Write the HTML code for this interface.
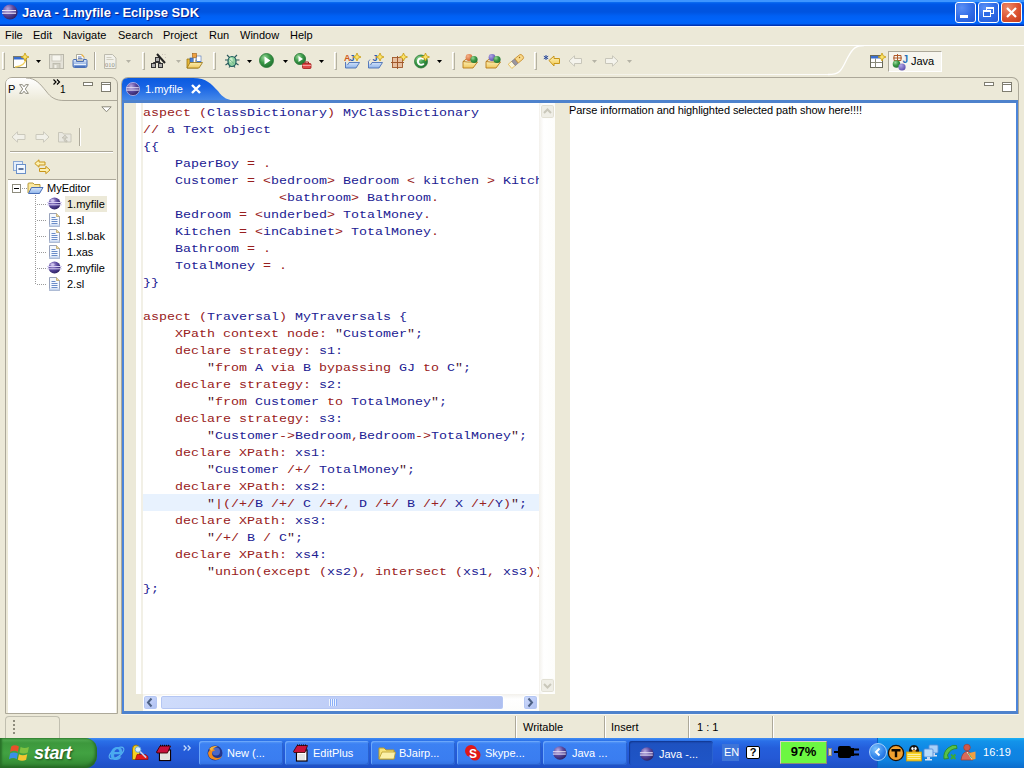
<!DOCTYPE html>
<html><head><meta charset="utf-8">
<style>
*{box-sizing:border-box;margin:0;padding:0}
html,body{width:1024px;height:768px;overflow:hidden;background:#ece9d8;font-family:"Liberation Sans",sans-serif;font-size:11px;color:#000}
.abs{position:absolute}
#title{left:0;top:0;width:1024px;height:26px;background:linear-gradient(#3d95ff 0,#3d95ff 1.5px,#0a6af0 2.5px,#0058e8 4px,#0054e0 8px,#0054e0 12px,#0060f4 16px,#0064fb 21px,#0062f6 24px,#0034b4 25px,#0034b4 26px)}
#title .t{left:22px;top:5px;color:#fff;font-weight:bold;font-size:13px;letter-spacing:0px;text-shadow:1px 1px 1px #0a1883;white-space:nowrap}
#menu{left:0;top:26px;width:1024px;height:19px;background:#ece9d8;border-top:1px solid #f8faff}
#menu span{position:absolute;top:2px;font-size:11px}
#tool{left:0;top:45px;width:1024px;height:1px;background:#fff}
.sep{position:absolute;top:6px;width:2px;height:18px;border-left:1px solid #aca899;border-right:1px solid #fff}
#left{left:5px;top:77px;width:112px;height:635px;border:1px solid #aca899;border-radius:7px 7px 0 0;background:#ece9d8}
#tree{left:1px;top:100px;width:108px;height:533px;background:#fff}
#edin{left:122px;top:100px;width:896px;height:614px;border:2px solid #4b84d9;border-top:3px solid #4e82cc;border-bottom:3px solid #4e82cc;background:#fff}
#code{left:142px;padding-left:1px;top:103px;font-family:"Liberation Mono",monospace;font-size:13.33px;line-height:17px;color:#202092;width:397px;overflow:hidden}
#code div{height:17px;white-space:pre}
#code i{display:block;position:relative;top:1px;font-style:normal;transform:scaleY(.87);transform-origin:0 12px}
#code .hl{background:#e8f2fe}
.r{color:#982020}
.k{color:#502030}
#status{left:0;top:714px;width:1024px;height:24px}
#task{left:0;top:738px;width:1024px;height:30px;background:linear-gradient(#3f8cf3 0,#2a6fe8 3px,#245edb 10px,#2459d6 20px,#1d4fc4 30px)}

.wb{position:absolute;top:2px;width:21px;height:21px;border:1px solid #fff;border-radius:3px;background:radial-gradient(circle at 30% 25%,#5a8ff5 0,#2f6be6 55%,#2356d4 100%)}
.wb.close{background:radial-gradient(circle at 30% 25%,#ee8a6a 0,#dc5230 55%,#c23a1c 100%)}
#tabhdr{left:0;top:0;width:895px;height:23px}
.sb{position:absolute;background:linear-gradient(90deg,#f3f1ec 0,#fff 30%,#fdfdfb 100%)}
.sbh{position:absolute;background:linear-gradient(#f3f1ec 0,#fff 30%,#fdfdfb 100%)}
.sbtn{position:absolute;width:15px;height:15px;border:1px solid #fff;border-radius:3px;background:linear-gradient(135deg,#cfdcfb 0,#bccbf6 60%,#aebff0 100%);box-shadow:inset 0 0 0 1px #b4c6f3}
.sbtn.dis{background:#efeee6;box-shadow:inset 0 0 0 1px #e2e0d4;border-color:#fdfdfb}

.stsep{position:absolute;top:716px;width:2px;height:22px;border-left:1px solid #aca899;border-right:1px solid #fff}
.sttx{position:absolute;top:721px;font-size:11px}
.tb{position:absolute;top:741px;width:84px;height:24px;border-radius:3px;background:linear-gradient(#5a9cf8 0,#3c81f3 3px,#3a7df0 19px,#3270e0 24px);box-shadow:inset 1px 1px 0 #6aa6fa,inset -1px -1px 0 #2a62cf;color:#fff;font-size:11px}
.tb.act{background:linear-gradient(#1a45a8 0,#1e52c1 3px,#1f55c7 24px);box-shadow:inset 1px 1px 1px #123a96,inset -1px 0 0 #2a62cf}
.tb span{position:absolute;left:28px;top:6px;white-space:nowrap}
.tb svg{position:absolute;left:7px;top:3px}

.hd{position:absolute;top:52px;width:3px;height:18px;border-left:1px solid #fff;border-right:1px solid #b5b2a2;background:#ece9d8;border-top:1px solid #fff;border-bottom:1px solid #b5b2a2}
.sp{position:absolute;top:52px;width:2px;height:18px;border-left:1px solid #aca899;border-right:1px solid #fff}
.tx{font-size:11px;white-space:nowrap}
</style></head><body>
<div id="title" class="abs">
<svg class="abs" style="left:1px;top:3px" width="18" height="18" viewBox="0 0 18 18"><defs><radialGradient id="eg" cx="35%" cy="30%" r="75%"><stop offset="0" stop-color="#b9a9e0"/><stop offset=".5" stop-color="#5b4aa0"/><stop offset="1" stop-color="#2c2060"/></radialGradient></defs><circle cx="9" cy="9" r="7.6" fill="url(#eg)"/><rect x="1" y="7" width="14" height="1.2" fill="#e8e4f8"/><rect x="1" y="9.6" width="14" height="1.2" fill="#e8e4f8"/></svg>
<div class="abs t">Java - 1.myfile - Eclipse SDK</div>
<div class="wb" style="left:955px"><div class="abs" style="left:4px;top:12px;width:8px;height:3px;background:#fff"></div></div>
<div class="wb" style="left:978px"><div class="abs" style="left:7px;top:4px;width:8px;height:7px;border:1px solid #fff;border-top-width:2px"></div><div class="abs" style="left:4px;top:7px;width:8px;height:7px;border:1px solid #fff;border-top-width:2px;background:#2f6be6"></div></div>
<div class="wb close" style="left:1001px"><svg class="abs" style="left:0;top:0" width="19" height="19"><path d="M5 5 L14 14 M14 5 L5 14" stroke="#fff" stroke-width="2.2"/></svg></div>
</div>
<div id="menu" class="abs"><span style="left:5px">File</span><span style="left:33px">Edit</span><span style="left:63px">Navigate</span><span style="left:118px">Search</span><span style="left:163px">Project</span><span style="left:209px">Run</span><span style="left:240px">Window</span><span style="left:290px">Help</span></div>
<div id="tool" class="abs"></div>
<!--TOOL-->
<svg width="0" height="0" style="position:absolute"><defs>
<linearGradient id="fold" x1="0" y1="0" x2="0" y2="1"><stop offset="0" stop-color="#fbeeb0"/><stop offset="1" stop-color="#f0c860"/></linearGradient>
<linearGradient id="bfold" x1="0" y1="0" x2="0" y2="1"><stop offset="0" stop-color="#d6e6fb"/><stop offset="1" stop-color="#8fb4ea"/></linearGradient>
<radialGradient id="grn" cx="35%" cy="30%" r="75%"><stop offset="0" stop-color="#9ad89a"/><stop offset=".5" stop-color="#3c9a48"/><stop offset="1" stop-color="#1f7030"/></radialGradient>
<radialGradient id="org" cx="35%" cy="30%" r="75%"><stop offset="0" stop-color="#f6b48a"/><stop offset="1" stop-color="#d0602a"/></radialGradient>
<radialGradient id="pur" cx="35%" cy="30%" r="75%"><stop offset="0" stop-color="#b0a6e4"/><stop offset="1" stop-color="#5a4cae"/></radialGradient>
<linearGradient id="prt" x1="0" y1="0" x2="0" y2="1"><stop offset="0" stop-color="#dce8fa"/><stop offset="1" stop-color="#6f96d6"/></linearGradient>
<linearGradient id="yar" x1="0" y1="0" x2="0" y2="1"><stop offset="0" stop-color="#fdf3c0"/><stop offset="1" stop-color="#f3c84a"/></linearGradient>
</defs></svg>
<div class="hd" style="left:2px"></div>
<svg class="abs" style="left:13px;top:53px" width="16" height="16" viewBox="0 0 16 16"><rect x=".5" y="3.5" width="13" height="11" fill="#fff" stroke="#7a7a6a"/><rect x="1" y="4" width="12" height="2.5" fill="#3a6fd0"/><path d="M2 14 Q12 13 13 6" fill="none" stroke="#f0d060" stroke-width="1.5"/><path d="M12 0L13.2 2.8L16 4L13.2 5.2L12 8L10.8 5.2L8 4L10.8 2.8Z" fill="#fbe36a" stroke="#c89a10" stroke-width=".8"/></svg>
<svg class="abs" style="left:36px;top:60px" width="5" height="3"><path d="M0 0h5L2.5 3z" fill="#000"/></svg>
<svg class="abs" style="left:49px;top:54px" width="15" height="15" viewBox="0 0 15 15"><rect x=".5" y=".5" width="14" height="14" fill="#e4e2d8" stroke="#b9b7aa"/><rect x="3" y="1" width="9" height="6" fill="#f6f5ee" stroke="#c5c3b6" stroke-width=".8"/><rect x="4" y="9.5" width="7" height="5" fill="#d2d0c4" stroke="#b9b7aa" stroke-width=".8"/><rect x="5.5" y="11" width="2" height="3" fill="#f1f0e8"/></svg>
<svg class="abs" style="left:72px;top:53px" width="16" height="16" viewBox="0 0 16 16"><path d="M4.5 7V1.5h5l2.5 2.5v3z" fill="#fff" stroke="#9a9888" stroke-width=".8"/><path d="M9.5 1.5l2.5 2.5" stroke="#e8b040" stroke-width="1.300"/><path d="M6 4h3.5M6 5.700h4.5" stroke="#4a68a8" stroke-width=".9"/><path d="M1 7.5Q1 6.5 2 6.5H4.5V8.5H11.5V6.5H14Q15 6.5 15 7.5V13Q15 14.5 13.5 14.5H2.5Q1 14.5 1 13Z" fill="url(#prt)" stroke="#4a6fb6" stroke-width="1"/><path d="M2 11.5H14" stroke="#eaf2fc" stroke-width="1"/><path d="M2.5 13.5H13.5" stroke="#4a72be" stroke-width="1.5"/></svg>
<div class="sp" style="left:94px"></div>
<svg class="abs" style="left:104px;top:54px" width="13" height="15" viewBox="0 0 13 15"><path d="M.5 .5h8l3.5 3.5v10.5h-11.5z" fill="#f2f1ea" stroke="#bdbbae"/><path d="M2.5 3.5h5M2.5 5.5h7" stroke="#cfcdc0" stroke-width="1"/><text x="1" y="12.5" font-size="6.5" font-family="Liberation Serif" fill="#8f8d80">010</text></svg>
<svg class="abs" style="left:126px;top:60px" width="5" height="3"><path d="M0 0h5L2.5 3z" fill="#b5b3a6"/></svg>
<div class="hd" style="left:142px"></div>
<svg class="abs" style="left:150px;top:53px" width="17" height="16" viewBox="0 0 17 16"><rect x="5.5" y="4.5" width="4" height="4" fill="#b0b0b0" stroke="#333"/><rect x="1.5" y="10.5" width="4" height="4" fill="#b0b0b0" stroke="#333"/><rect x="8.5" y="10.5" width="4" height="4" fill="#b0b0b0" stroke="#333"/><path d="M7.5 8.5v1M3.5 10.5v-1h7v1" fill="none" stroke="#333"/><path d="M7 1 L15 10" stroke="#222" stroke-width="2"/><path d="M12 1l.5 .5M14.5 2l.5-.5M15 4.5h.5" stroke="#a99" stroke-width="1"/></svg>
<svg class="abs" style="left:176px;top:60px" width="5" height="3"><path d="M0 0h5L2.5 3z" fill="#b5b3a6"/></svg>
<svg class="abs" style="left:186px;top:53px" width="17" height="16" viewBox="0 0 17 16"><path d="M1 6h4l1 1.5h6V15H1z" fill="#e8b838" stroke="#9a7410" stroke-width=".8"/><rect x="4" y="5" width="4" height="6" fill="#4a7fd6" stroke="#2a4f96" stroke-width=".6"/><rect x="10.5" y="3" width="4.5" height="8" fill="#fff" stroke="#4a6fb6" stroke-width=".6"/><rect x="11" y="8" width="4" height="3" fill="#4a7fd6"/><rect x="6.5" y=".5" width="4" height="4" fill="#f0a040" stroke="#a06010" stroke-width=".6"/><rect x="7.5" y="5" width="2" height="6" fill="#fff" stroke="#888" stroke-width=".4"/><path d="M1 15 L4 9.5 H16.5 L13 15Z" fill="url(#fold)" stroke="#9a7410" stroke-width=".8"/></svg>
<div class="hd" style="left:213px"></div>
<svg class="abs" style="left:224px;top:53px" width="16" height="16" viewBox="0 0 16 16"><path d="M3 2l3 3M13 2l-3 3M1 7h3M12 7h3.5M1.5 12l3-2M14.5 12l-3-2M5 14.5l1.5-2M11 14.5l-1.5-2" stroke="#2a5a5a" stroke-width="1.100" fill="none"/><ellipse cx="8" cy="8.5" rx="4" ry="5" fill="#8fd0a0" stroke="#1f5f5f" stroke-width="1.200"/><ellipse cx="7" cy="7" rx="1.800" ry="2.5" fill="#c8f0c8"/><path d="M5.5 6.5 L10 10.5" stroke="#5aa07a" stroke-width=".7"/></svg>
<svg class="abs" style="left:247px;top:60px" width="5" height="3"><path d="M0 0h5L2.5 3z" fill="#000"/></svg>
<svg class="abs" style="left:259px;top:53px" width="15" height="15" viewBox="0 0 15 15"><circle cx="7.5" cy="7.5" r="7" fill="url(#grn)" stroke="#2a7a36" stroke-width=".8"/><path d="M5.5 3.5v8l6-4z" fill="#fff"/></svg>
<svg class="abs" style="left:283px;top:60px" width="5" height="3"><path d="M0 0h5L2.5 3z" fill="#000"/></svg>
<svg class="abs" style="left:294px;top:53px" width="18" height="16" viewBox="0 0 18 16"><circle cx="6" cy="6" r="5.600" fill="url(#grn)" stroke="#2a7a36" stroke-width=".8"/><path d="M4.5 3v6l4.5-3z" fill="#fff"/><rect x="8.5" y="10.5" width="8.5" height="5" rx="1" fill="#e04848" stroke="#a01818" stroke-width=".8"/><path d="M11 10.5v-1.5h3.5v1.5" fill="none" stroke="#a01818" stroke-width="1"/><path d="M8.5 12.5h8.5" stroke="#f8b0b0" stroke-width=".8"/></svg>
<svg class="abs" style="left:319px;top:60px" width="5" height="3"><path d="M0 0h5L2.5 3z" fill="#000"/></svg>
<div class="hd" style="left:334px"></div>
<svg class="abs" style="left:344px;top:53px" width="17" height="16" viewBox="0 0 17 16"><path d="M1.5 9 L1.5 15 H12 L15.5 9.5 H5 L3.5 12" fill="url(#bfold)" stroke="#4a6fb6" stroke-width=".9"/><text x="0" y="8" font-size="9" font-weight="bold" font-family="Liberation Sans" fill="#d05a1a">A</text><text x="5.5" y="8" font-size="9" font-weight="bold" font-family="Liberation Sans" fill="#2a5fb0">J</text><path d="M13 0L14.2 2.8L17 4L14.2 5.2L13 8L11.8 5.2L9 4L11.8 2.8Z" fill="#fbe36a" stroke="#c89a10" stroke-width=".8"/></svg>
<svg class="abs" style="left:367px;top:53px" width="17" height="16" viewBox="0 0 17 16"><path d="M1.5 9 L1.5 15 H12 L15.5 9.5 H5 L3.5 12" fill="url(#bfold)" stroke="#4a6fb6" stroke-width=".9"/><path d="M1 9 l2-2.5" stroke="#4a6fb6" stroke-width=".8"/><text x="5.5" y="8" font-size="9" font-weight="bold" font-family="Liberation Sans" fill="#2a5fb0">J</text><path d="M13 0L14.2 2.8L17 4L14.2 5.2L13 8L11.8 5.2L9 4L11.8 2.8Z" fill="#fbe36a" stroke="#c89a10" stroke-width=".8"/></svg>
<svg class="abs" style="left:391px;top:53px" width="17" height="16" viewBox="0 0 17 16"><rect x="1.5" y="4.5" width="10" height="10" fill="#e8c0a0" stroke="#a0582a" stroke-width=".9"/><path d="M6.5 3v13M0 9.5h13" stroke="#a0582a" stroke-width="1"/><path d="M12.5 0L13.7 2.8L16.5 4L13.7 5.2L12.5 8L11.3 5.2L8.5 4L11.3 2.8Z" fill="#fbe36a" stroke="#c89a10" stroke-width=".8"/></svg>
<svg class="abs" style="left:414px;top:53px" width="16" height="16" viewBox="0 0 16 16"><circle cx="7" cy="8.5" r="6.5" fill="url(#grn)" stroke="#2a7a36" stroke-width=".8"/><path d="M9.800 6.5 A3.300 3.300 0 1 0 9.800 10.5" fill="none" stroke="#fff" stroke-width="2"/><path d="M11.5 0L12.7 2.8L15.5 4L12.7 5.2L11.5 8L10.3 5.2L7.5 4L10.3 2.8Z" fill="#fbe36a" stroke="#c89a10" stroke-width=".8"/></svg>
<svg class="abs" style="left:437px;top:60px" width="5" height="3"><path d="M0 0h5L2.5 3z" fill="#000"/></svg>
<div class="hd" style="left:452px"></div>
<svg class="abs" style="left:462px;top:53px" width="17" height="16" viewBox="0 0 17 16"><path d="M1 8.5 V15 H11 L15.5 9 H5.5 Z" fill="url(#fold)" stroke="#b87a18" stroke-width=".9"/><path d="M1 8.5 L5 5.5" stroke="#b87a18" stroke-width=".9"/><circle cx="7" cy="4.5" r="3.400" fill="url(#org)"/><circle cx="12" cy="6.5" r="3.600" fill="url(#grn)"/></svg>
<svg class="abs" style="left:485px;top:53px" width="17" height="16" viewBox="0 0 17 16"><path d="M1 8.5 V15 H11 L15.5 9 H5.5 Z" fill="url(#fold)" stroke="#b87a18" stroke-width=".9"/><path d="M1 8.5 L5 5.5" stroke="#b87a18" stroke-width=".9"/><circle cx="7" cy="4.5" r="3.400" fill="url(#pur)"/><circle cx="12" cy="6.5" r="3.600" fill="url(#grn)"/></svg>
<svg class="abs" style="left:508px;top:53px" width="17" height="16" viewBox="0 0 17 16"><g transform="rotate(-40 8 8)"><rect x="0" y="5.5" width="5" height="5.5" fill="#fbf6d8" stroke="#e0b040" stroke-width=".7"/><rect x="4.5" y="5.5" width="4" height="5.5" fill="#9a96a0" stroke="#6a6670" stroke-width=".5"/><path d="M8.5 5.5h6q2 0 2 2.750t-2 2.750h-6z" fill="#f8d888" stroke="#c88a28" stroke-width=".8"/><circle cx="13" cy="7.5" r=".7" fill="#a06a18"/></g></svg>
<div class="hd" style="left:534px"></div>
<svg class="abs" style="left:543px;top:53px" width="18" height="16" viewBox="0 0 18 16"><path d="M6 8 L11 3.5 V6 H16.5 V11 H11 V13.5Z" fill="url(#yar)" stroke="#c8961a" stroke-width="1" transform="translate(0,-.5)"/><path d="M3 2v5M.8 3.200l4.400 2.600M5.200 3.200L.8 5.800" stroke="#2a4a9a" stroke-width="1"/></svg>
<svg class="abs" style="left:568px;top:55px" width="15" height="12" viewBox="0 0 15 12"><path d="M1 6 L6.5 .8 V3.5 H13.5 V8.5 H6.5 V11.200Z" fill="#f4f3ec" stroke="#c8c6ba" stroke-width="1"/></svg>
<svg class="abs" style="left:592px;top:60px" width="5" height="3"><path d="M0 0h5L2.5 3z" fill="#b5b3a6"/></svg>
<svg class="abs" style="left:604px;top:55px" width="15" height="12" viewBox="0 0 15 12"><path d="M14 6 L8.5 .8 V3.5 H1.5 V8.5 H8.5 V11.200Z" fill="#f4f3ec" stroke="#c8c6ba" stroke-width="1"/></svg>
<svg class="abs" style="left:627px;top:60px" width="5" height="3"><path d="M0 0h5L2.5 3z" fill="#b5b3a6"/></svg>
<div class="abs" style="left:0;top:74px;width:831px;height:1px;background:linear-gradient(90deg,rgba(255,255,255,0) 0,rgba(255,255,255,0) 50%,rgba(255,255,255,.9) 100%)"></div>
<svg class="abs" style="left:828px;top:45px" width="36" height="31"><path d="M0 29.5 C14 29.5 14 23 20 12 C25 3 28 .5 36 .5" fill="none" stroke="#fff" stroke-width="1.300"/></svg>
<svg class="abs" style="left:870px;top:53px" width="16" height="16" viewBox="0 0 16 16"><rect x=".5" y="2.5" width="12" height="12" fill="#fff" stroke="#6a6a5a"/><rect x="1" y="3" width="11" height="2.5" fill="#3a6fd0"/><path d="M1 9.5h11M5.5 5.5v9" stroke="#8a8a7a" stroke-width="1"/><path d="M12 0L13.2 2.8L16 4L13.2 5.2L12 8L10.8 5.2L8 4L10.8 2.8Z" fill="#fbe36a" stroke="#c89a10" stroke-width=".8"/></svg>
<div class="abs" style="left:888px;top:51px;width:54px;height:21px;border:1px solid #aca899;border-right-color:#fff;border-bottom-color:#fff;background:#f6f5ee"></div>
<svg class="abs" style="left:892px;top:54px" width="18" height="17" viewBox="0 0 18 17"><path d="M2 1.5h7v5h-7zM5.5 0v8M1 4h9" fill="none" stroke="#b05a2a" stroke-width="1"/><circle cx="4.5" cy="10" r="3.800" fill="url(#grn)"/><circle cx="10" cy="13" r="3.600" fill="url(#pur)"/><text x="10.5" y="8.5" font-size="10" font-weight="bold" font-family="Liberation Sans" fill="#2a6fb8">J</text></svg>
<div class="abs" style="left:911px;top:55px;font-size:11px">Java</div>
<!--/TOOL-->
<!--LEFT-->
<div class="abs" style="left:5px;top:77px;width:113px;height:637px;border:1px solid #aca899;border-radius:7px 7px 0 0"></div>
<svg class="abs" style="left:6px;top:78px" width="111" height="23" viewBox="0 0 111 23"><defs><linearGradient id="ltg" x1="0" y1="0" x2="0" y2="1"><stop offset="0" stop-color="#fff"/><stop offset="1" stop-color="#ece9d8"/></linearGradient></defs><path d="M0 23 V6 Q0 0 6 0 H20 C30 0 34 6 40 13 C45 20 50 22.5 58 22.5 H111 V23Z" fill="url(#ltg)"/><path d="M20 0 C30 0 34 6 40 13 C45 20 50 22.5 58 22.5 H111" fill="none" stroke="#aca899" stroke-width="1"/></svg>
<div class="abs" style="left:8px;top:83px;font-size:11px">P</div>
<svg class="abs" style="left:18px;top:83px" width="12" height="12" viewBox="0 0 11 11"><path d="M1.5 1.5h2.5l1.5 2 1.5-2h2.5l-2.800 4 2.800 4h-2.5l-1.5-2-1.5 2h-2.5l2.800-4z" fill="#fff" stroke="#8a887a" stroke-width=".9"/></svg>
<svg class="abs" style="left:53px;top:79px" width="8" height="7" viewBox="0 0 8 7"><path d="M.5 .5L3 3 .5 5.5M4 .5L6.5 3 4 5.5" fill="none" stroke="#000" stroke-width="1.200"/></svg>
<div class="abs" style="left:60px;top:84px;font-size:10px">1</div>
<div class="abs" style="left:83px;top:82px;width:10px;height:4px;border:1px solid #7f7d70;background:#fff"></div>
<div class="abs" style="left:101px;top:82px;width:10px;height:10px;border:1px solid #7f7d70;background:#fff"><div class="abs" style="left:0;top:1px;width:8px;height:1px;background:#7f7d70"></div></div>
<svg class="abs" style="left:101px;top:106px" width="11" height="7" viewBox="0 0 11 7"><path d="M.8 .8h9.400L5.5 5.800z" fill="#fff" stroke="#8a887a" stroke-width="1"/></svg>
<svg class="abs" style="left:11px;top:131px" width="16" height="12" viewBox="0 0 16 12"><path d="M1 6 L6.5 .8 V3.5 H14 V8.5 H6.5 V11.200Z" fill="#f1f0e8" stroke="#cbc9bc" stroke-width="1"/></svg>
<svg class="abs" style="left:34px;top:131px" width="16" height="12" viewBox="0 0 16 12"><path d="M15 6 L9.5 .8 V3.5 H2 V8.5 H9.5 V11.200Z" fill="#f1f0e8" stroke="#cbc9bc" stroke-width="1"/></svg>
<svg class="abs" style="left:58px;top:130px" width="14" height="14" viewBox="0 0 14 14"><path d="M.5 2.5h4l1 1.5h7.5v8h-12.5z" fill="#e9e8e0" stroke="#c5c3b6" stroke-width=".9"/><path d="M7 5l-3 3h2v2q0 2 3 2v-1.5q-1.5 0-1.5-1v-1.5h2z" fill="#d5d3c8" stroke="#b9b7aa" stroke-width=".6"/></svg>
<div class="abs" style="left:79px;top:128px;width:2px;height:18px;border-left:1px solid #aca899;border-right:1px solid #fff"></div>
<div class="abs" style="left:10px;top:151px;width:103px;height:2px;border-top:1px solid #aca899;border-bottom:1px solid #fff"></div>
<svg class="abs" style="left:13px;top:161px" width="13" height="13" viewBox="0 0 13 13"><rect x=".5" y=".5" width="9" height="9" fill="#e4eefa" stroke="#8aa8d4"/><rect x="3.5" y="3.5" width="9" height="9" fill="#f2f8ff" stroke="#6a90c8"/><path d="M5.5 8h5" stroke="#1f3f7a" stroke-width="1.400"/></svg>
<svg class="abs" style="left:34px;top:159px" width="17" height="16" viewBox="0 0 17 16"><path d="M.8 4.5 L5 .8 V3 H11 V6 H5 V8.200Z" fill="#fdf0b0" stroke="#c8961a" stroke-width="1"/><path d="M16 11 L11.800 7.300 V9.5 H5.5 V12.5 H11.800 V14.700Z" fill="#fdf0b0" stroke="#c8961a" stroke-width="1"/></svg>
<div class="abs" style="left:8px;top:179px;width:108px;height:534px;background:#fff;border-top:1px solid #aca899"></div>
<div class="abs" style="left:35px;top:195px;width:1px;height:90px;background:repeating-linear-gradient(#9a9a9a 0,#9a9a9a 1px,transparent 1px,transparent 2px)"></div>
<div class="abs" style="left:22px;top:188px;width:6px;height:1px;background:repeating-linear-gradient(90deg,#9a9a9a 0,#9a9a9a 1px,transparent 1px,transparent 2px)"></div>
<div class="abs" style="left:36px;top:204px;width:11px;height:1px;background:repeating-linear-gradient(90deg,transparent 0,transparent 1px,#9a9a9a 1px,#9a9a9a 2px)"></div>
<div class="abs" style="left:36px;top:220px;width:11px;height:1px;background:repeating-linear-gradient(90deg,transparent 0,transparent 1px,#9a9a9a 1px,#9a9a9a 2px)"></div>
<div class="abs" style="left:36px;top:236px;width:11px;height:1px;background:repeating-linear-gradient(90deg,transparent 0,transparent 1px,#9a9a9a 1px,#9a9a9a 2px)"></div>
<div class="abs" style="left:36px;top:252px;width:11px;height:1px;background:repeating-linear-gradient(90deg,transparent 0,transparent 1px,#9a9a9a 1px,#9a9a9a 2px)"></div>
<div class="abs" style="left:36px;top:268px;width:11px;height:1px;background:repeating-linear-gradient(90deg,transparent 0,transparent 1px,#9a9a9a 1px,#9a9a9a 2px)"></div>
<div class="abs" style="left:36px;top:284px;width:11px;height:1px;background:repeating-linear-gradient(90deg,transparent 0,transparent 1px,#9a9a9a 1px,#9a9a9a 2px)"></div>
<div class="abs" style="left:12px;top:184px;width:9px;height:9px;border:1px solid #8e8c7d;background:#fff"></div><div class="abs" style="left:14px;top:188px;width:5px;height:1px;background:#000"></div>
<svg class="abs" style="left:27px;top:181px" width="17" height="14" viewBox="0 0 17 14"><path d="M1 12 V3 Q1 2 2 2 H6 L7.5 3.5 H13 V6" fill="#fbe9a0" stroke="#b0902a" stroke-width=".9"/><path d="M1.5 12.5 L4.5 6.5 H16 L12.5 12.5Z" fill="url(#bfold)" stroke="#3a62b0" stroke-width=".9"/></svg>
<div class="abs tx" style="left:47px;top:182px">MyEditor</div>
<div class="abs" style="left:65px;top:196px;width:42px;height:16px;background:#ece9d8"></div>
<svg class="abs" style="left:47px;top:197px" width="15" height="13" viewBox="0 0 15 13"><circle cx="7.5" cy="6.5" r="6" fill="url(#eg)"/><rect x="0" y="5" width="15" height="1" fill="#d8d0f4"/><rect x="0" y="7.300" width="15" height="1" fill="#d8d0f4"/><ellipse cx="5.5" cy="3.5" rx="2" ry="1.300" fill="#e0d8f8" opacity=".7"/></svg>
<div class="abs tx" style="left:67px;top:198px">1.myfile</div>
<svg class="abs" style="left:49px;top:213px" width="11" height="14" viewBox="0 0 11 14"><path d="M.5 .5h7l3 3v10h-10z" fill="#f4f8fe" stroke="#8c98b4" stroke-width=".9"/><path d="M.5 11.5h10v2h-10z" fill="#c4d4ee"/><path d="M7.5 .5v3h3" fill="#f5dc90" stroke="#b09a60" stroke-width=".7"/><path d="M2.5 4.5h4M2.5 6.5h6M2.5 8.5h6M2.5 10.5h6" stroke="#6a8cc8" stroke-width="1"/></svg>
<div class="abs tx" style="left:67px;top:214px">1.sl</div>
<svg class="abs" style="left:49px;top:229px" width="11" height="14" viewBox="0 0 11 14"><path d="M.5 .5h7l3 3v10h-10z" fill="#f4f8fe" stroke="#8c98b4" stroke-width=".9"/><path d="M.5 11.5h10v2h-10z" fill="#c4d4ee"/><path d="M7.5 .5v3h3" fill="#f5dc90" stroke="#b09a60" stroke-width=".7"/><path d="M2.5 4.5h4M2.5 6.5h6M2.5 8.5h6M2.5 10.5h6" stroke="#6a8cc8" stroke-width="1"/></svg>
<div class="abs tx" style="left:67px;top:230px">1.sl.bak</div>
<svg class="abs" style="left:49px;top:245px" width="11" height="14" viewBox="0 0 11 14"><path d="M.5 .5h7l3 3v10h-10z" fill="#f4f8fe" stroke="#8c98b4" stroke-width=".9"/><path d="M.5 11.5h10v2h-10z" fill="#c4d4ee"/><path d="M7.5 .5v3h3" fill="#f5dc90" stroke="#b09a60" stroke-width=".7"/><path d="M2.5 4.5h4M2.5 6.5h6M2.5 8.5h6M2.5 10.5h6" stroke="#6a8cc8" stroke-width="1"/></svg>
<div class="abs tx" style="left:67px;top:246px">1.xas</div>
<svg class="abs" style="left:47px;top:261px" width="15" height="13" viewBox="0 0 15 13"><circle cx="7.5" cy="6.5" r="6" fill="url(#eg)"/><rect x="0" y="5" width="15" height="1" fill="#d8d0f4"/><rect x="0" y="7.300" width="15" height="1" fill="#d8d0f4"/><ellipse cx="5.5" cy="3.5" rx="2" ry="1.300" fill="#e0d8f8" opacity=".7"/></svg>
<div class="abs tx" style="left:67px;top:262px">2.myfile</div>
<svg class="abs" style="left:49px;top:277px" width="11" height="14" viewBox="0 0 11 14"><path d="M.5 .5h7l3 3v10h-10z" fill="#f4f8fe" stroke="#8c98b4" stroke-width=".9"/><path d="M.5 11.5h10v2h-10z" fill="#c4d4ee"/><path d="M7.5 .5v3h3" fill="#f5dc90" stroke="#b09a60" stroke-width=".7"/><path d="M2.5 4.5h4M2.5 6.5h6M2.5 8.5h6M2.5 10.5h6" stroke="#6a8cc8" stroke-width="1"/></svg>
<div class="abs tx" style="left:67px;top:278px">2.sl</div>
<!--/LEFT-->
<div class="abs" style="left:121px;top:77px;width:898px;height:24px;border:1px solid #aca899;border-bottom:0;border-radius:7px 7px 0 0"></div>
<div class="abs" style="left:121px;top:100px;width:1px;height:614px;background:#aca899"></div>
<div class="abs" style="left:1018px;top:100px;width:1px;height:614px;background:#aca899"></div>
<div class="abs" style="left:984px;top:82px;width:10px;height:4px;border:1px solid #7f7d70;background:#fff"></div>
<div class="abs" style="left:1002px;top:82px;width:10px;height:10px;border:1px solid #7f7d70;background:#fff"><div class="abs" style="left:0;top:1px;width:8px;height:1px;background:#7f7d70"></div></div>
<svg class="abs" style="left:122px;top:78px" width="120" height="24" viewBox="0 0 120 24"><defs><linearGradient id="tg" x1="0" y1="0" x2="0" y2="1"><stop offset="0" stop-color="#0a5ae0"/><stop offset=".35" stop-color="#1763e4"/><stop offset="1" stop-color="#4a8dea"/></linearGradient></defs>
<path d="M0 24 L0 6 Q0 0 6 0 L71 0 C85 0 89 6 96 13 C101 20 106 22.5 114 22.5 L120 22.5 L120 24 Z" fill="url(#tg)"/></svg>
<svg class="abs" style="left:125px;top:81px" width="16" height="16" viewBox="0 0 18 18"><circle cx="9" cy="9" r="7.4" fill="url(#eg)" stroke="#c9c0ee" stroke-width=".8"/><rect x="1.5" y="7" width="14" height="1.2" fill="#e8e4f8"/><rect x="1.5" y="9.6" width="14" height="1.2" fill="#e8e4f8"/></svg>
<div class="abs" style="left:145px;top:83px;color:#fff;font-size:11px">1.myfile</div>
<svg class="abs" style="left:190px;top:83px" width="12" height="12"><path d="M2 2 L10 10 M10 2 L2 10" stroke="#fff" stroke-width="2.4"/></svg>
<div id="edin" class="abs"></div>
<div class="abs" style="left:124px;top:103px;width:12px;height:608px;background:#ece9d8"></div>
<div class="abs" style="left:141px;top:103px;width:2px;height:591px;background:#f2f0e6"></div>
<div class="abs" style="left:136px;top:694px;width:7px;height:17px;background:#ece9d8"></div>
<!-- v scrollbar -->
<div class="sb" style="left:539px;top:103px;width:16px;height:591px"></div>
<div class="sbtn dis" style="left:540px;top:104px"><svg width="15" height="15" class="abs" style="left:-1px;top:-1px"><path d="M4 9 L7.5 5.5 L11 9" fill="none" stroke="#c9c7ba" stroke-width="2"/></svg></div>
<div class="sbtn dis" style="left:540px;top:678px"><svg width="15" height="15" class="abs" style="left:-1px;top:-1px"><path d="M4 6 L7.5 9.5 L11 6" fill="none" stroke="#c9c7ba" stroke-width="2"/></svg></div>
<!-- h scrollbar -->
<div class="sbh" style="left:143px;top:694px;width:396px;height:17px"></div>
<div class="sbtn" style="left:143px;top:695px"><svg width="15" height="15" class="abs" style="left:-1px;top:-1px"><path d="M8.5 3.5 L5 7.5 L8.5 11.5" fill="none" stroke="#4d6185" stroke-width="2"/></svg></div>
<div class="sbtn" style="left:523px;top:695px"><svg width="15" height="15" class="abs" style="left:-1px;top:-1px"><path d="M5.5 3.5 L9 7.5 L5.5 11.5" fill="none" stroke="#4d6185" stroke-width="2"/></svg></div>
<div class="sbtn" style="left:160px;top:695px;width:344px"><div class="abs" style="left:168px;top:3px;width:8px;height:7px;background:repeating-linear-gradient(90deg,#eef4fe 0,#eef4fe 1px,#8cb0f8 1px,#8cb0f8 2px)"></div></div>
<div class="abs" style="left:539px;top:694px;width:16px;height:17px;background:#ece9d8"></div>
<!-- sash -->
<div class="abs" style="left:555px;top:103px;width:15px;height:608px;background:#ece9d8"></div>
<div class="abs" style="left:569px;top:104px;font-size:11px;letter-spacing:-.09px;white-space:nowrap">Parse information and highlighted selected path show here!!!!</div>
<div id="code" class="abs">
<div><i><span class="r">aspect (</span>ClassDictionary<span class="r">) </span>MyClassDictionary</i></div>
<div><i><span class="r">// </span>a Text object</i></div>
<div><i>{{</i></div>
<div><i>    PaperBoy <span class="r">= .</span></i></div>
<div><i>    Customer <span class="r">= &lt;</span>bedroom<span class="r">&gt; </span>Bedroom <span class="r">&lt; </span>kitchen <span class="r">&gt; </span>Kitchen<span class="r">.</span></i></div>
<div><i>                 <span class="r">&lt;</span>bathroom<span class="r">&gt; </span>Bathroom<span class="r">.</span></i></div>
<div><i>    Bedroom <span class="r">= &lt;</span>underbed<span class="r">&gt; </span>TotalMoney<span class="r">.</span></i></div>
<div><i>    Kitchen <span class="r">= &lt;</span>inCabinet<span class="r">&gt; </span>TotalMoney<span class="r">.</span></i></div>
<div><i>    Bathroom <span class="r">= .</span></i></div>
<div><i>    TotalMoney <span class="r">= .</span></i></div>
<div><i>}}</i></div>
<div><i></i></div>
<div><i><span class="r">aspect (</span>Traversal<span class="r">) </span>MyTraversals {</i></div>
<div><i>    <span class="r">XPath context node: </span><span class="k">"</span>Customer<span class="k">"</span>;</i></div>
<div><i>    <span class="r">declare strategy: </span>s1:</i></div>
<div><i>        <span class="k">"</span><span class="r">from </span>A <span class="r">via </span>B <span class="r">bypassing </span>GJ <span class="r">to </span>C<span class="k">"</span>;</i></div>
<div><i>    <span class="r">declare strategy: </span>s2:</i></div>
<div><i>        <span class="k">"</span><span class="r">from </span>Customer <span class="r">to </span>TotalMoney<span class="k">"</span>;</i></div>
<div><i>    <span class="r">declare strategy: </span>s3:</i></div>
<div><i>        <span class="k">"</span>Customer<span class="r">-&gt;</span>Bedroom<span class="r">,</span>Bedroom<span class="r">-&gt;</span>TotalMoney<span class="k">"</span>;</i></div>
<div><i>    <span class="r">declare XPath: </span>xs1:</i></div>
<div><i>        <span class="k">"</span>Customer <span class="r">/+/ </span>TotalMoney<span class="k">"</span>;</i></div>
<div><i>    <span class="r">declare XPath: </span>xs2:</i></div>
<div class="hl"><i>        <span class="k">"</span><span class="r">|(/+/</span>B <span class="r">/+/ </span>C <span class="r">/+/, </span>D <span class="r">/+/ </span>B <span class="r">/+/ </span>X <span class="r">/+/</span>Y<span class="r">)</span><span class="k">"</span>;</i></div>
<div><i>    <span class="r">declare XPath: </span>xs3:</i></div>
<div><i>        <span class="k">"</span><span class="r">/+/ </span>B <span class="r">/ </span>C<span class="k">"</span>;</i></div>
<div><i>    <span class="r">declare XPath: </span>xs4:</i></div>
<div><i>        <span class="k">"</span><span class="r">union(except (</span>xs2<span class="r">), intersect (</span>xs1<span class="r">, </span>xs3<span class="r">))</span><span class="k">"</span>;</i></div>
<div><i>};</i></div>
</div>
<div id="status" class="abs">
<div class="abs" style="left:5px;top:2px;width:55px;height:24px;border:1px solid #c1bfb0;border-bottom:0;border-radius:4px 4px 0 0"></div>
<div class="abs" style="left:13px;top:6px;width:2px;height:14px;background:repeating-linear-gradient(#8e8c7d 0,#8e8c7d 2px,transparent 2px,transparent 4px)"></div>
</div>
<div class="abs" style="left:121px;top:714px;width:898px;height:1px;background:#f6f5ee"></div><div class="stsep" style="left:515px"></div><div class="stsep" style="left:604px"></div><div class="stsep" style="left:688px"></div><div class="stsep" style="left:772px"></div>
<div class="sttx" style="left:523px">Writable</div><div class="sttx" style="left:611px">Insert</div><div class="sttx" style="left:697px">1 : 1</div>
<div id="task" class="abs">
<div class="abs" style="left:0;top:0;width:97px;height:30px;border-radius:0 12px 12px 0;background:linear-gradient(#3a8a3a 0,#4ca64c 2px,#3d983d 5px,#42a242 15px,#3a963a 22px,#2e7e2e 30px);box-shadow:inset -2px -2px 3px #256a25,inset 2px 0 2px #2a742a"></div>
<svg class="abs" style="left:9px;top:4px" width="21" height="21" viewBox="0 0 19 19"><path d="M2 4 Q5 2 9 4 L8 9 Q5 7 1 9Z" fill="#e8502a"/><path d="M10.5 4.5 Q14 6.5 18 4.5 L17 9.5 Q13 11.5 9.5 9.5Z" fill="#7fc241"/><path d="M1 10.5 Q4 8.5 8 10.5 L7 15.5 Q4 13.5 0 15.5Z" fill="#3b8fe8"/><path d="M9 11 Q12.5 13 16.5 11 L15.5 16 Q12 18 8 16Z" fill="#f5c530"/></svg>
<div class="abs" style="left:34px;top:5px;color:#fff;font-weight:bold;font-style:italic;font-size:18px;letter-spacing:-.3px;text-shadow:1px 1px 2px #1c4d1c">start</div>
<svg class="abs" style="left:183px;top:7px" width="9" height="6"><path d="M.7 .5L3.2 3 .7 5.5M4.700 .5L7.2 3 4.700 5.5" fill="none" stroke="#c4dcfa" stroke-width="1.300"/></svg>
<svg class="abs" style="left:108px;top:6px" width="18" height="18" viewBox="0 0 18 18"><ellipse cx="8.5" cy="9" rx="8.5" ry="4" transform="rotate(-35 8.5 9)" fill="none" stroke="#5ab4f0" stroke-width="1.1"/><text x="2" y="15.5" font-family="Liberation Sans" font-weight="bold" font-style="italic" font-size="23" fill="#4aaaf0">e</text></svg>
<svg class="abs" style="left:131px;top:6px" width="18" height="18" viewBox="0 0 18 18"><path d="M1.5 15.5V5Q1.5 1 5 1T8.5 5V15.5Z" fill="#f5d020" stroke="#8a6a00" stroke-width=".8"/><path d="M4.5 15.5L6 10.5H14.5L17 12.5V15.5Z" fill="#e01a1a" stroke="#800" stroke-width=".6"/><path d="M9 7.5L15 13.5" stroke="#fff" stroke-width="1.600"/><path d="M9 7.5L15 13.5" stroke="#5a7ad0" stroke-width=".7"/><circle cx="7" cy="5.5" r="2.800" fill="#d8f0fc" stroke="#6aa8d8" stroke-width="1"/></svg>
<svg class="abs" style="left:155px;top:6px" width="18" height="18" viewBox="0 0 18 18"><rect x="4.5" y="6" width="11" height="10.5" fill="#fff" stroke="#100" stroke-width="1.2"/><path d="M6 10h8M6 12h8M6 14h8" stroke="#c8c4bc" stroke-width="1"/><path d="M1.5 8L5 2H15.5L12.5 9H2Z" fill="#c8103c" stroke="#300" stroke-width=".9"/><path d="M5.5 2V.8M7.5 2V.8M9.5 2V.8M11.5 2V.8M13.5 2V.8" stroke="#100" stroke-width="1"/></svg>
</div>
<div class="tb" style="left:199px"><svg width="18" height="18" viewBox="0 0 18 18"><circle cx="9" cy="9" r="7.5" fill="#22358c"/><circle cx="10" cy="7.5" r="4" fill="#4a68c8"/><path d="M2 9 A7.5 7.5 0 0 0 16.5 11 C15 15 7 15 6 10 C5.5 7 8 6 9 7 C8 4 5 3 2 9Z" fill="#f08a1c"/><path d="M3 5 Q6 1 12 2.5 Q7 3 6 7Z" fill="#f6b23a"/></svg><span>New (...</span></div>
<div class="tb" style="left:285px"><svg width="18" height="18" viewBox="0 0 18 18"><rect x="4.5" y="6" width="10.5" height="11" fill="#fff" stroke="#100" stroke-width="1.2"/><path d="M1.5 7.5 L5 1.5 L15.5 1.5 L13 8.5 L2 8.5Z" fill="#c8143c" stroke="#300" stroke-width=".8"/><path d="M6 11h7M6 13h7M6 15h7" stroke="#bbb" stroke-width=".8"/><path d="M5.5 1.5V.5M7.5 1.5V.5M9.5 1.5V.5M11.5 1.5V.5M13.5 1.5V.5" stroke="#100" stroke-width="1"/></svg><span>EditPlus</span></div>
<div class="tb" style="left:371px"><svg width="18" height="18" viewBox="0 0 18 18"><path d="M1 4 L6 4 L8 6 L16 6 L16 15 L1 15Z" fill="#f6e27a" stroke="#b89a28" stroke-width="1"/><path d="M1 15 L4 8 L17.5 8 L16 15Z" fill="#fbf0a8" stroke="#b89a28" stroke-width=".8"/></svg><span>BJairp...</span></div>
<div class="tb" style="left:457px"><svg width="18" height="18" viewBox="0 0 18 18"><circle cx="7" cy="7" r="6" fill="#e01818"/><circle cx="11" cy="11" r="5.5" fill="#e01818"/><text x="9" y="13.5" font-family="Liberation Sans" font-weight="bold" font-size="12" fill="#fff" text-anchor="middle">S</text></svg><span>Skype...</span></div>
<div class="tb" style="left:543px"><svg style="left:9px;top:4px" width="16" height="16" viewBox="0 0 18 18"><circle cx="9" cy="9" r="7.6" fill="url(#eg)"/><rect x="1" y="7" width="14.5" height="1.2" fill="#e8e4f8"/><rect x="1" y="9.6" width="14.5" height="1.2" fill="#e8e4f8"/></svg><span style="left:29px">Java ...</span></div>
<div class="tb act" style="left:629px"><svg style="left:10px;top:5px" width="16" height="16" viewBox="0 0 18 18"><circle cx="9" cy="9" r="7.6" fill="url(#eg)"/><rect x="1" y="7" width="14.5" height="1.2" fill="#e8e4f8"/><rect x="1" y="9.6" width="14.5" height="1.2" fill="#e8e4f8"/></svg><span style="left:30px;top:7px">Java -...</span></div>
<div class="abs" style="left:722px;top:744px;width:17px;height:17px;background:#3e74d8"></div>
<div class="abs" style="left:724px;top:746px;color:#fff;font-size:11px">EN</div>
<div class="abs" style="left:746px;top:746px;width:14px;height:13px;background:#fff;border:1px solid #000;border-radius:2px;font-size:11px;font-weight:bold;line-height:11px;text-align:center">?</div>
<div class="abs" style="left:780px;top:741px;width:47px;height:23px;background:#6cf742;border:1px solid #d6d2c2;border-right-color:#8a8878;border-bottom-color:#8a8878;font-weight:bold;font-size:13px;letter-spacing:-.2px;text-align:center;line-height:20px">97%</div>
<div class="abs" style="left:828px;top:748px;width:4px;height:8px;background:#d6d2c2;border:1px solid #8a8878"></div>
<svg class="abs" style="left:833px;top:743px" width="28" height="18" viewBox="0 0 28 18"><path d="M1 9h5" stroke="#000" stroke-width="2"/><rect x="5" y="3" width="13" height="12" rx="2" fill="#000"/><rect x="17" y="5" width="4" height="8" fill="#000"/><rect x="20" y="5.5" width="6" height="2" fill="#000"/><rect x="20" y="10.5" width="6" height="2" fill="#000"/></svg>
<div class="abs" style="left:877px;top:738px;width:147px;height:30px;background:linear-gradient(#19b0f5 0,#1394ea 3px,#0f86e4 12px,#0f82e0 22px,#0c6ccc 30px);border-left:1px solid #0a5fc2"></div>
<div class="abs" style="left:869px;top:743px;width:18px;height:18px;border-radius:9px;background:radial-gradient(circle at 35% 30%,#7ec2fb 0,#2f84ec 55%,#1456c8 100%);border:1px solid #a8d2fb"></div>
<svg class="abs" style="left:872px;top:746px" width="12" height="12"><path d="M7.5 2.5 L4 6 L7.5 9.5" fill="none" stroke="#fff" stroke-width="2"/></svg>
<svg class="abs" style="left:887px;top:744px" width="18" height="18" viewBox="0 0 18 18"><circle cx="9" cy="9" r="7.6" fill="#f0a030" stroke="#201000" stroke-width="1.3"/><path d="M4.5 6.2h9M9 6.2v7" stroke="#100800" stroke-width="2.4" fill="none"/></svg>
<svg class="abs" style="left:905px;top:744px" width="18" height="18" viewBox="0 0 18 18"><path d="M4 9Q3.5 1 9 1T14 9Z" fill="#141414"/><ellipse cx="7.5" cy="4.5" rx="1.2" ry="1.6" fill="#fff"/><ellipse cx="10.5" cy="4.5" rx="1.2" ry="1.6" fill="#fff"/><ellipse cx="9" cy="7" rx="2.2" ry=".9" fill="#f0a020"/><rect x="1.5" y="8" width="15" height="9" fill="#f8d428" stroke="#c89a10" stroke-width=".8"/><path d="M2.5 10.5h13M2.5 12.5h13M2.5 14.5h13" stroke="#fbeea0" stroke-width="1"/></svg>
<svg class="abs" style="left:923px;top:744px" width="17" height="18" viewBox="0 0 17 18"><rect x="6" y="1" width="9" height="8" rx="1" fill="#a8d0f8" stroke="#5a90d8" stroke-width=".9"/><rect x="9" y="9" width="3" height="2" fill="#c8d8f0"/><rect x="7" y="11" width="7" height="1.5" fill="#d8e4f4"/><rect x="1" y="5" width="9" height="8" rx="1" fill="#b8dcfb" stroke="#5a90d8" stroke-width=".9"/><rect x="4" y="13" width="3" height="2" fill="#c8d8f0"/><rect x="2" y="15" width="7" height="1.5" fill="#d8e4f4"/></svg>
<svg class="abs" style="left:942px;top:744px" width="17" height="18" viewBox="0 0 17 18"><path d="M2 15Q1 8 6 4T14.5 1.5L15 4.5Q12 4.5 9.5 6T5.5 11L6.5 14.5Z" fill="#58c048" stroke="#2a8a28" stroke-width=".9"/><path d="M9 10.5L13.5 15M13.5 10.5L9 15" stroke="#3aa838" stroke-width="1.800"/></svg>
<svg class="abs" style="left:960px;top:743px" width="17" height="18" viewBox="0 0 17 18"><path d="M1 17Q2 9 7 8.5T13 17Z" fill="#d86a5a" stroke="#a03828" stroke-width=".7"/><circle cx="7" cy="4.5" r="3.3" fill="#d0584a" stroke="#a03828" stroke-width=".6"/><path d="M9.5 10L15.5 8.5V16L11 17Z" fill="#f0a040"/><path d="M7 9L12 16" stroke="#e8f0e0" stroke-width="1"/><path d="M8 10L12 15.5" stroke="#50a850" stroke-width=".8"/></svg>
<div class="abs" style="left:983px;top:746px;color:#fff;font-size:11px;letter-spacing:.1px">16:19</div>

</body></html>
